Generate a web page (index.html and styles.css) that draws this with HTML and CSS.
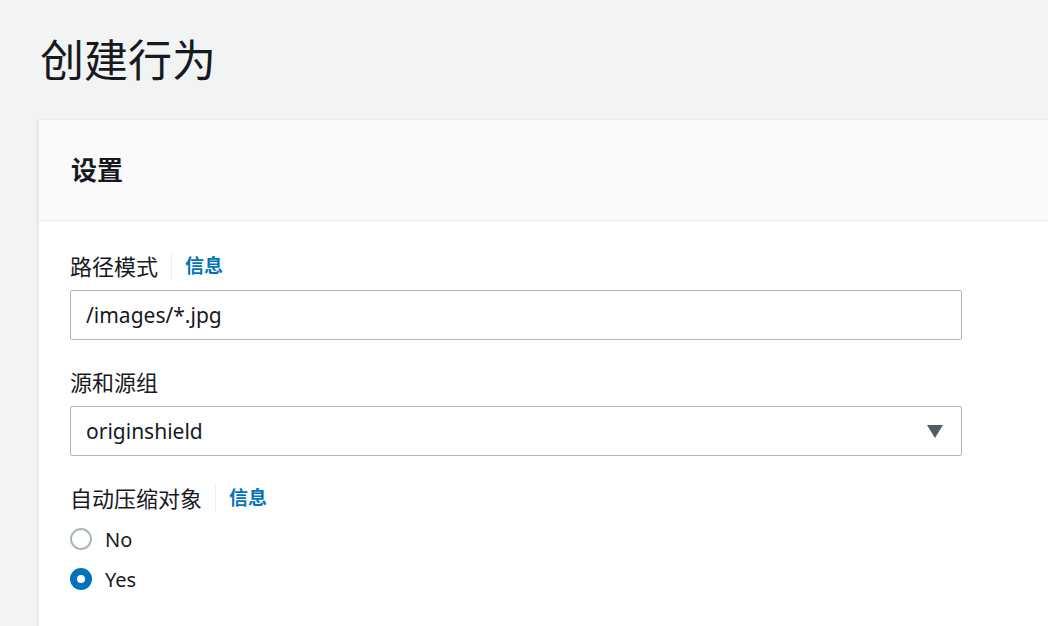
FILE: index.html
```html
<!DOCTYPE html>
<html lang="zh-CN">
<head>
    <meta charset="UTF-8">
    <meta name="viewport" content="width=device-width, initial-scale=1.0">
    <title>创建行为</title>
    <link rel="stylesheet" href="styles.css">
</head>
<body>
    <h1 class="page-title">创建行为</h1>

    <div class="card">
        <div class="card-header">
            <h2>设置</h2>
        </div>
        <div class="card-body">
            <div class="field">
                <div class="field-label">
                    <span>路径模式</span>
                    <a class="info-link" href="#">信息</a>
                </div>
                <div class="text-input">/images/*.jpg</div>
            </div>

            <div class="field">
                <div class="field-label">
                    <span>源和源组</span>
                </div>
                <div class="text-input select">
                    <span>originshield</span>
                    <span class="caret"></span>
                </div>
            </div>

            <div class="field">
                <div class="field-label">
                    <span>自动压缩对象</span>
                    <a class="info-link" href="#">信息</a>
                </div>
                <div class="radio-group">
                    <div class="radio-row">
                        <span class="radio"></span>
                        <span>No</span>
                    </div>
                    <div class="radio-row">
                        <span class="radio checked"></span>
                        <span>Yes</span>
                    </div>
                </div>
            </div>
        </div>
    </div>
</body>
</html>
```

FILE: styles.css
```css
html, body {
    height: 100%;
}
body {
    margin: 0;
    padding: 30px 0 0 0;
    background-color: #f2f3f3;
    font-family: "Noto Sans", "Noto Sans CJK SC", sans-serif;
    color: #16191f;
    overflow: hidden;
    box-sizing: border-box;
    display: flex;
    flex-direction: column;
}
.page-title {
    margin: 0 0 29px 40px;
    font-size: 44px;
    font-weight: 400;
    line-height: 60px;
}
.card {
    flex: 1;
    margin: 0 -20px 0 38px;
    background-color: #ffffff;
    border-left: 1px solid #eaeded;
    border-top: 1px solid #eaeded;
    box-shadow: 0 1px 2px rgba(0, 28, 36, 0.2);
}
.card-header {
    background-color: #fafafa;
    border-bottom: 1px solid #eaeded;
    height: 100px;
    display: flex;
    align-items: center;
    padding: 0 32px;
}
.card-header h2 {
    margin: 0;
    font-size: 26px;
    font-weight: 700;
    line-height: 36px;
}
.card-body {
    padding: 30px 31px 0 31px;
}
.field {
    margin-bottom: 27px;
}
.field-label {
    display: flex;
    align-items: center;
    font-size: 22px;
    line-height: 30px;
    height: 30px;
    margin-bottom: 9px;
}
.info-link {
    color: #0073bb;
    font-weight: 700;
    font-size: 19px;
    text-decoration: none;
    margin-left: 13px;
    padding-left: 13px;
    border-left: 1px solid #eaeded;
    line-height: 26px;
}
.text-input {
    width: 892px;
    height: 50px;
    box-sizing: border-box;
    border: 1px solid #aab7b8;
    border-radius: 2px;
    padding: 0 15px;
    display: flex;
    align-items: center;
    font-size: 21px;
}
.select {
    justify-content: space-between;
    padding-right: 18px;
}
.caret {
    width: 0;
    height: 0;
    border-left: 8.5px solid transparent;
    border-right: 8.5px solid transparent;
    border-top: 13px solid #545b64;
}
.radio-group {
    margin-top: -3px;
}
.radio-row {
    display: flex;
    align-items: center;
    height: 40px;
    font-size: 20px;
}
.radio {
    width: 22px;
    height: 22px;
    box-sizing: border-box;
    border: 2px solid #aab7b8;
    border-radius: 50%;
    margin-right: 13px;
}
.radio.checked {
    border: 7px solid #0073bb;
}
```
